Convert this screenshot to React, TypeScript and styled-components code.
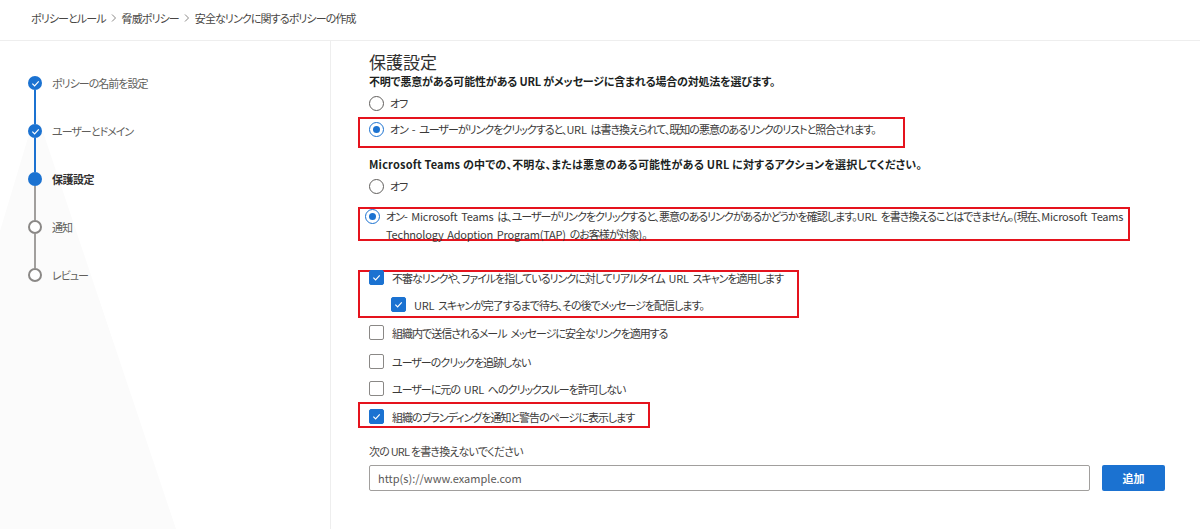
import React from "react";
import styled, { createGlobalStyle, css } from "styled-components";

const GlobalStyle = createGlobalStyle`
  html, body {
    margin: 0;
    padding: 0;
    background: #ffffff;
  }
  body {
    font-family: "Noto Sans CJK JP", "Noto Sans", sans-serif;
    font-feature-settings: "palt";
    color: #323130;
    font-size: 11px;
  }
  * {
    box-sizing: border-box;
  }
`;

const BLUE = "#1b72d1";

const Page = styled.div`
  width: 1200px;
  height: 529px;
  overflow: hidden;
  display: flex;
  flex-direction: column;
`;

const Breadcrumb = styled.nav`
  height: 41px;
  border-bottom: 1px solid #eeeeee;
  display: flex;
  align-items: center;
  padding: 0 0 4px 31px;
  gap: 3px;
  font-size: 11px;
  letter-spacing: -0.9px;
  color: #484644;
`;

const Crumb = styled.span`
  white-space: nowrap;
`;

const Body = styled.div`
  flex: 1;
  display: flex;
`;

const Sidebar = styled.aside`
  position: relative;
  width: 331px;
  border-right: 1px solid #eeeeee;
  padding: 35px 0 0 28px;

  &::before {
    content: "";
    position: absolute;
    inset: 0;
    background: #fbfbfb;
    clip-path: polygon(36px 70px, 176px 100%, 0 100%, 0 190px);
  }
`;

const Steps = styled.ol`
  position: relative;
  list-style: none;
  margin: 0;
  padding: 0;
`;

const StepRow = styled.li`
  display: flex;
  align-items: center;
  gap: 10px;
  height: 14px;
`;

type StepState = "done" | "current" | "todo";

const Dot = styled.span<{ $state: StepState }>`
  width: 14px;
  height: 14px;
  border-radius: 50%;
  flex-shrink: 0;
  display: flex;
  align-items: center;
  justify-content: center;
  ${({ $state }) =>
    $state === "todo"
      ? css`
          background: #ffffff;
          border: 2px solid #8a8886;
        `
      : css`
          background: ${BLUE};
        `}
`;

const StepLabel = styled.span<{ $state: StepState }>`
  font-size: 11px;
  letter-spacing: ${({ $state }) => ($state === "current" ? "-0.5px" : "-1px")};
  color: ${({ $state }) => ($state === "current" ? "#323130" : "#605e5c")};
  font-weight: ${({ $state }) => ($state === "current" ? 700 : 400)};
  white-space: nowrap;
`;

const Connector = styled.li<{ $active: boolean }>`
  width: 2px;
  height: 34px;
  margin-left: 6px;
  background: ${({ $active }) => ($active ? BLUE : "#a19f9d")};
`;

const Main = styled.main`
  flex: 1;
  padding: 10px 0 0 38px;
  display: flex;
  flex-direction: column;
`;

const Title = styled.h2`
  margin: 0;
  font-size: 17px;
  line-height: 22px;
  font-weight: 400;
  color: #323130;
`;

const Question = styled.p<{ $mt?: number; $ls: number }>`
  margin: ${({ $mt }) => $mt ?? 0}px 0 0;
  font-size: 11px;
  line-height: 16px;
  font-weight: 700;
  letter-spacing: ${({ $ls }) => $ls}px;
  color: #201f1e;
`;

const Highlight = styled.div<{ $width: number; $height: number; $mt: number; $pad: string }>`
  width: ${({ $width }) => $width}px;
  height: ${({ $height }) => $height}px;
  margin: ${({ $mt }) => $mt}px 0 0 -11px;
  border: 2px solid #e5131d;
  padding: ${({ $pad }) => $pad};
  display: flex;
  flex-direction: column;
`;

const OptionRow = styled.label<{ $mt?: number; $indent?: number; $gap: number }>`
  display: flex;
  align-items: flex-start;
  gap: ${({ $gap }) => $gap}px;
  margin: ${({ $mt }) => $mt ?? 0}px 0 0 ${({ $indent }) => $indent ?? 0}px;
  line-height: 18px;
  font-size: 11px;
  color: #3b3a39;
`;

const RadioCircle = styled.span<{ $checked?: boolean }>`
  width: 15px;
  height: 15px;
  margin-top: 2px;
  border-radius: 50%;
  border: 1px solid ${({ $checked }) => ($checked ? BLUE : "#605e5c")};
  flex-shrink: 0;
  display: flex;
  align-items: center;
  justify-content: center;

  &::after {
    content: "";
    width: 7px;
    height: 7px;
    border-radius: 50%;
    background: ${({ $checked }) => ($checked ? BLUE : "transparent")};
  }
`;

const Box = styled.span<{ $checked?: boolean }>`
  width: 15px;
  height: 15px;
  margin-top: 1px;
  border-radius: 2px;
  flex-shrink: 0;
  display: flex;
  align-items: center;
  justify-content: center;
  border: 1px solid ${({ $checked }) => ($checked ? BLUE : "#8a8886")};
  background: ${({ $checked }) => ($checked ? BLUE : "#ffffff")};
`;

const OptionText = styled.span`
  white-space: nowrap;
  letter-spacing: -1px;
`;

const Latin = styled.span`
  letter-spacing: -0.2px;
  word-spacing: 1.5px;
`;

const FieldLabel = styled.div`
  margin-top: 15px;
  font-size: 11px;
  line-height: 16px;
  letter-spacing: -0.8px;
  color: #484644;
`;

const InputRow = styled.div`
  margin-top: 6px;
  display: flex;
  gap: 12px;
  align-items: center;
`;

const UrlInput = styled.input`
  width: 721px;
  height: 26px;
  border: 1px solid #a19f9d;
  border-radius: 2px;
  padding: 0 8px;
  font-family: inherit;
  font-size: 11px;
  color: #323130;
  outline: none;

  &::placeholder {
    color: #5b5957;
  }
`;

const AddButton = styled.button`
  width: 63px;
  height: 26px;
  border: none;
  border-radius: 2px;
  background: ${BLUE};
  color: #ffffff;
  font-family: inherit;
  font-size: 11px;
  font-weight: 700;
`;

const Check = () => (
  <svg width="9" height="9" viewBox="0 0 10 10">
    <path d="M1.5 5.2 L4 7.6 L8.6 2.6" fill="none" stroke="#fff" strokeWidth="1.3" />
  </svg>
);

const Chevron = () => (
  <svg width="10" height="10" viewBox="0 0 10 10">
    <path d="M3 1.5 L6.5 5 L3 8.5" fill="none" stroke="#8a8886" strokeWidth="1" />
  </svg>
);

// ASCII runs (with their spaces) keep near-normal spacing; Japanese is tightened like the original UI font
const Mixed = ({ text }: { text: string }) => (
  <>
    {text.split(/([\x20-\x7E]+)/).map((part, i) =>
      i % 2 === 1 ? <Latin key={i}>{part}</Latin> : <React.Fragment key={i}>{part}</React.Fragment>
    )}
  </>
);

const steps: { label: string; state: StepState }[] = [
  { label: "ポリシーの名前を設定", state: "done" },
  { label: "ユーザーとドメイン", state: "done" },
  { label: "保護設定", state: "current" },
  { label: "通知", state: "todo" },
  { label: "レビュー", state: "todo" },
];

const Radio = ({ checked, lines, mt }: { checked?: boolean; lines: string[]; mt?: number }) => (
  <OptionRow $mt={mt} $gap={6}>
    <RadioCircle $checked={checked} />
    <OptionText>
      {lines.map((l, i) => (
        <React.Fragment key={i}>
          {i > 0 && <br />}
          <Mixed text={l} />
        </React.Fragment>
      ))}
    </OptionText>
  </OptionRow>
);

const CheckOption = ({
  checked,
  text,
  mt,
  indent,
}: {
  checked?: boolean;
  text: string;
  mt?: number;
  indent?: number;
}) => (
  <OptionRow $mt={mt} $indent={indent} $gap={8}>
    <Box $checked={checked}>{checked && <Check />}</Box>
    <OptionText>
      <Mixed text={text} />
    </OptionText>
  </OptionRow>
);

export default function App() {
  return (
    <Page>
      <GlobalStyle />
      <Breadcrumb>
        <Crumb>ポリシーとルール</Crumb>
        <Chevron />
        <Crumb>脅威ポリシー</Crumb>
        <Chevron />
        <Crumb>安全なリンクに関するポリシーの作成</Crumb>
      </Breadcrumb>
      <Body>
        <Sidebar>
          <Steps>
            {steps.map((s, i) => (
              <React.Fragment key={s.label}>
                <StepRow>
                  <Dot $state={s.state}>{s.state === "done" && <Check />}</Dot>
                  <StepLabel $state={s.state}>{s.label}</StepLabel>
                </StepRow>
                {i < steps.length - 1 && <Connector $active={s.state === "done"} />}
              </React.Fragment>
            ))}
          </Steps>
        </Sidebar>
        <Main>
          <Title>保護設定</Title>
          <Question $ls={-0.2}>不明で悪意がある可能性がある URL がメッセージに含まれる場合の対処法を選びます。</Question>
          <Radio mt={5} lines={["オフ"]} />
          <Highlight $width={547} $height={31} $mt={5} $pad="1px 0 0 9px">
            <Radio
              checked
              lines={[
                "オン - ユーザーがリンクをクリックすると、URL は書き換えられて、既知の悪意のあるリンクのリストと照合されます。",
              ]}
            />
          </Highlight>
          <Question $mt={8} $ls={0.2}>
            Microsoft Teams の中での、不明な、または悪意のある可能性がある URL に対するアクションを選択してください。
          </Question>
          <Radio mt={5} lines={["オフ"]} />
          <Highlight $width={772} $height={34} $mt={12} $pad="0 0 0 5px">
            <Radio
              checked
              mt={-2}
              lines={[
                "オン- Microsoft Teams は、ユーザーがリンクをクリックすると、悪意のあるリンクがあるかどうかを確認します。URL を書き換えることはできません。(現在、Microsoft Teams",
                "Technology Adoption Program(TAP) のお客様が対象)。",
              ]}
            />
          </Highlight>
          <Highlight $width={441} $height={48} $mt={29} $pad="0 0 0 9px">
            <CheckOption checked mt={-3} text="不審なリンクや、ファイルを指しているリンクに対してリアルタイム URL スキャンを適用します" />
            <CheckOption checked mt={9} indent={22} text="URL スキャンが完了するまで待ち、その後でメッセージを配信します。" />
          </Highlight>
          <CheckOption mt={6} text="組織内で送信されるメール メッセージに安全なリンクを適用する" />
          <CheckOption mt={11} text="ユーザーのクリックを追跡しない" />
          <CheckOption mt={9} text="ユーザーに元の URL へのクリックスルーを許可しない" />
          <Highlight $width={292} $height={26} $mt={4} $pad="5px 0 0 9px">
            <CheckOption checked mt={-1} text="組織のブランディングを通知と警告のページに表示します" />
          </Highlight>
          <FieldLabel>次の URL を書き換えないでください</FieldLabel>
          <InputRow>
            <UrlInput placeholder="http(s)://www.example.com" />
            <AddButton>追加</AddButton>
          </InputRow>
        </Main>
      </Body>
    </Page>
  );
}
